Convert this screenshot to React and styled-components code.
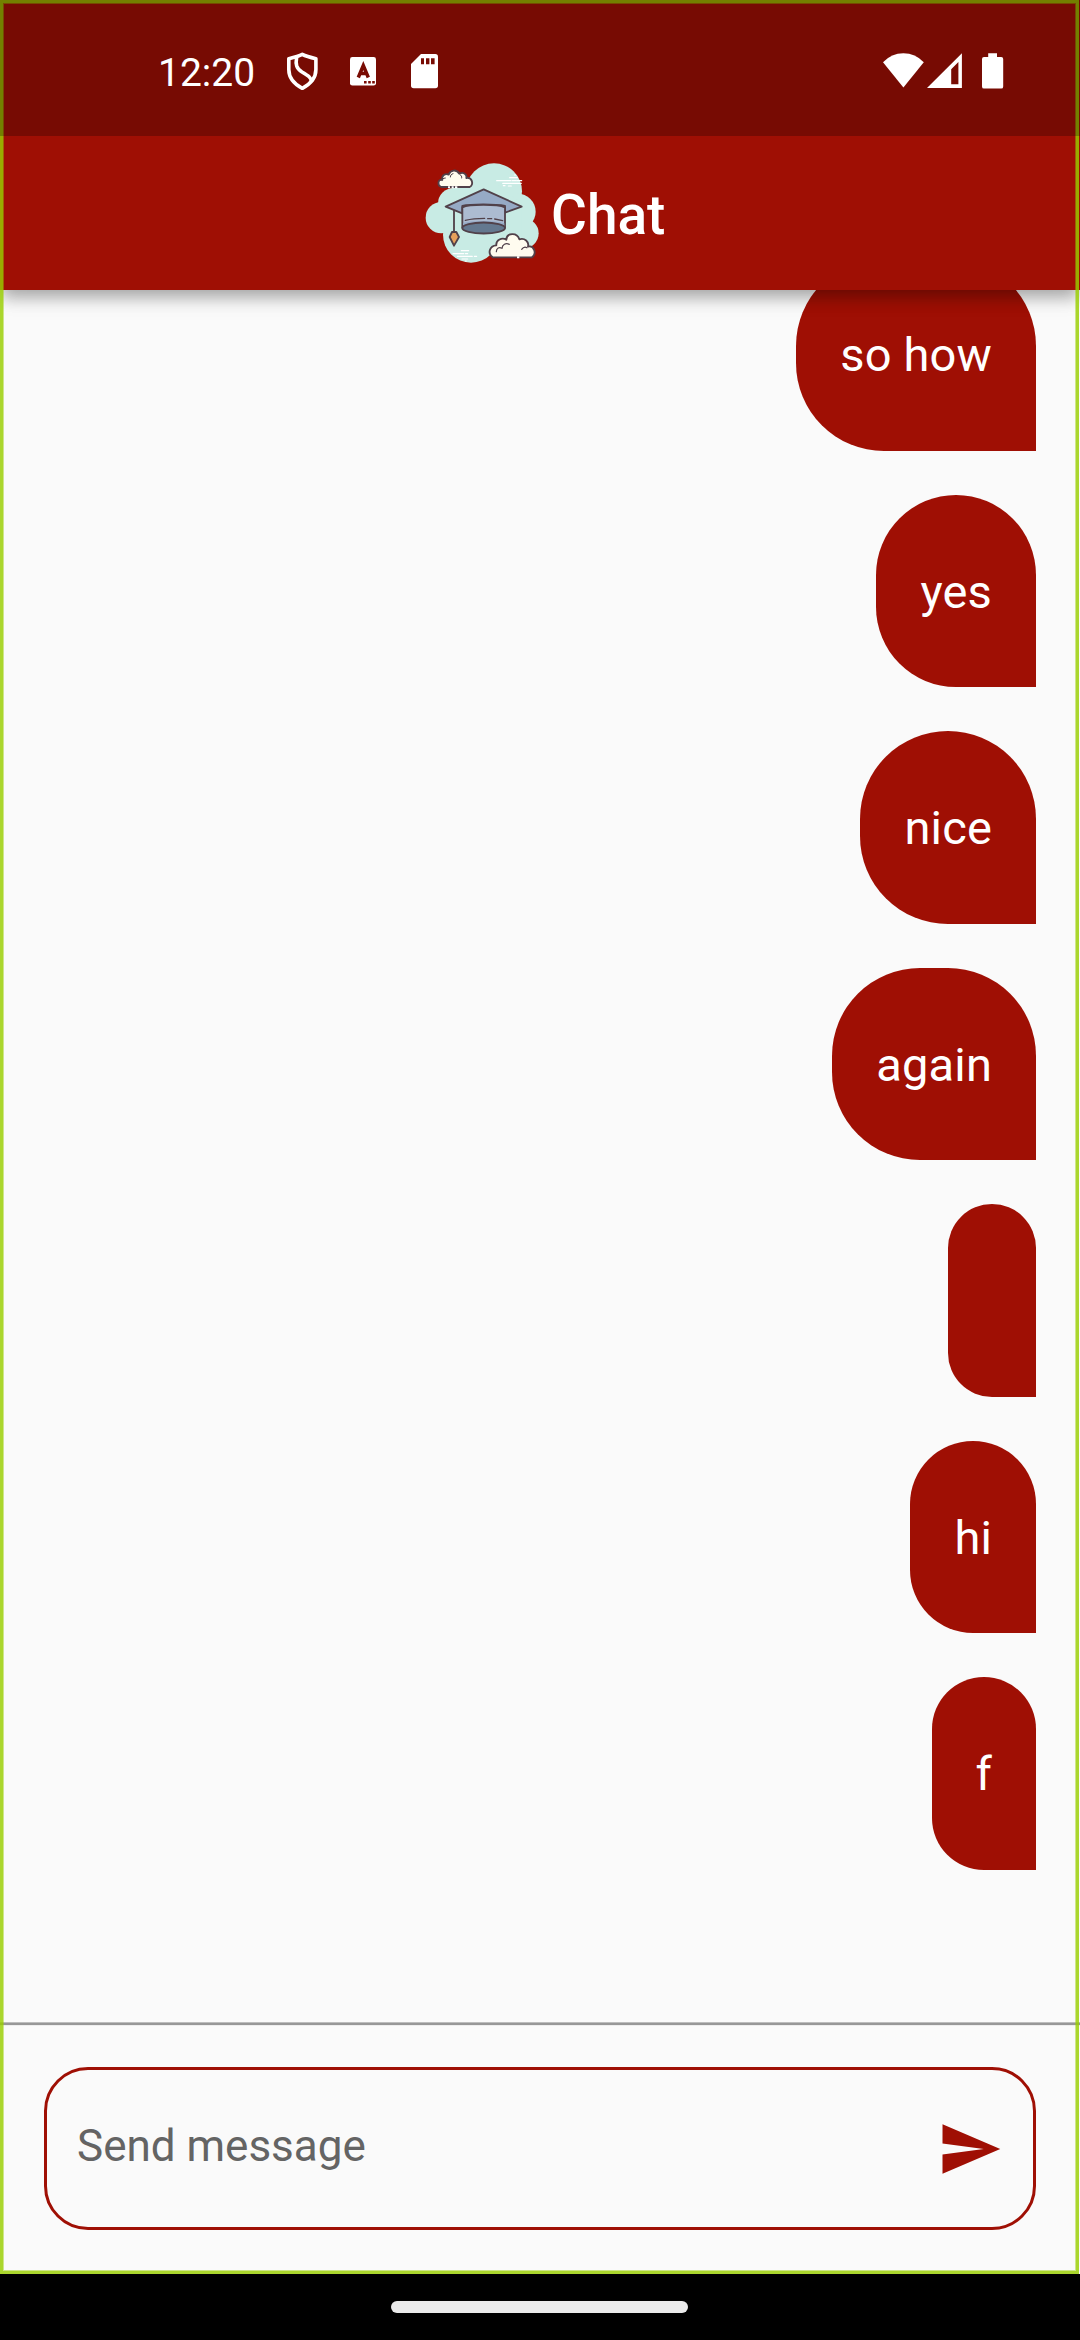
import React from "react";
import styled, { createGlobalStyle } from "styled-components";

const RED = "#9f0f04";

const GlobalStyle = createGlobalStyle`
  *, *::before, *::after { box-sizing: border-box; }
  body { margin: 0; background: #fafafa; }
  svg { display: block; flex: none; }
`;

const Screen = styled.div`
  position: relative;
  display: flex;
  flex-direction: column;
  width: 1080px;
  height: 2340px;
  overflow: hidden;
  background: #fafafa;
  font-family: Roboto, "Noto Sans", sans-serif;
`;

const DebugFrame = styled.div`
  position: absolute;
  z-index: 2;
  top: 0;
  left: 0;
  width: 1079px;
  height: 2274px;
  border: 3px solid rgba(152, 206, 0, 0.82);
  box-shadow: inset 0 0 0 1px rgba(152, 206, 0, 0.45);
  pointer-events: none;
`;

const Header = styled.header`
  position: relative;
  flex: none;
  background: ${RED};
  box-shadow: 0 11px 14px -3px rgba(0, 0, 0, 0.2), 0 3px 22px rgba(0, 0, 0, 0.22);
`;

const StatusBar = styled.div`
  position: relative;
  z-index: 3;
  display: flex;
  align-items: center;
  justify-content: space-between;
  height: 136px;
  padding: 6px 76px 0 158px;
  background: rgba(0, 0, 0, 0.25);
  color: #fff;
`;

const StatusGroup = styled.div`
  display: flex;
  align-items: center;
  gap: ${(p) => p.$gap}px;
`;

const Clock = styled.span`
  width: 102px;
  font-size: 39px;
  line-height: 46px;
  white-space: nowrap;
  padding-top: 3px;
`;

const AppBar = styled.div`
  display: flex;
  align-items: center;
  gap: 6px;
  height: 154px;
  padding-left: 425px;
`;

const Title = styled.h1`
  margin: 0;
  padding-top: 3px;
  color: #fff;
  font-size: 55px;
  font-weight: 500;
  line-height: 64px;
`;

const Messages = styled.main`
  flex: 1;
  min-height: 0;
  display: flex;
  flex-direction: column;
  justify-content: flex-end;
  align-items: flex-end;
  gap: 44px;
  padding: 0 44px 152.3px;
  overflow: hidden;
`;

const Bubble = styled.div`
  flex: none;
  display: flex;
  align-items: center;
  height: 192.5px;
  padding: 2px 44px 0;
  border-radius: 88px 88px 0 88px;
  background: ${RED};
  color: #fff;
  font-size: 47px;
  line-height: 54px;
  letter-spacing: 0.15px;
  white-space: nowrap;
`;

const Composer = styled.footer`
  flex: none;
  height: 252px;
`;

const Divider = styled.div`
  height: 4px;
  background: linear-gradient(#bdbdbd 0 1px, #979797 1px 3px, #ededed 3px 4px);
`;

const Field = styled.label`
  display: flex;
  align-items: center;
  justify-content: space-between;
  height: 163px;
  margin: 41px 44px 0;
  padding: 0 30px;
  border: 3px solid ${RED};
  border-radius: 44px;
`;

const Input = styled.input`
  flex: 1;
  min-width: 0;
  height: 60px;
  margin: 0 0 6px;
  padding: 0;
  border: 0;
  outline: 0;
  background: transparent;
  font: 400 44px Roboto, "Noto Sans", sans-serif;
  &::placeholder { color: #646464; opacity: 1; }
`;

const NavBar = styled.nav`
  flex: none;
  display: flex;
  justify-content: center;
  align-items: center;
  height: 66px;
  padding-right: 1px;
  background: #000;
`;

const HomePill = styled.div`
  width: 297px;
  height: 12px;
  border-radius: 6px;
  background: #ebebeb;
`;

const ShieldIcon = () => (
  <svg width="40" height="40" viewBox="0 0 40 40" fill="none" stroke="#fff" strokeWidth="3.6" strokeLinejoin="round">
    <path d="M20.3 3.4C16.5 5.4 11.5 6.6 6.8 7.7V18.5C6.8 27.2 12.8 33.4 20.3 37.3C27.8 33.4 33.9 27.2 33.9 18.5V7.7C29 6.6 24.2 5.4 20.3 3.4Z" />
    <path d="M14.6 6.5C13.4 13.5 14.3 17.4 20 21C26.2 24.6 29.6 26.6 29.4 31" />
  </svg>
);

const LetterIcon = () => (
  <svg width="40" height="40" viewBox="0 0 40 40">
    <rect x="7" y="6" width="26" height="28.6" rx="2.4" fill="#fff" />
    <path d="M15.3 26.5L20.3 14.6L25.3 26.5M17 22.6H23.6" fill="none" stroke="#790b03" strokeWidth="3.5" />
    <path d="M21 30h2.6v2.4H21zM25.2 30h2.6v2.4h-2.6zM29.2 30h2.6v2.4h-2.6z" fill="#790b03" />
  </svg>
);

const SdIcon = () => (
  <svg width="40" height="40" viewBox="0 0 40 40">
    <path d="M16 3H30.3Q33 3 33 5.7V34.6Q33 37.3 30.3 37.3H8.7Q6 37.3 6 34.6V13Z" fill="#fff" />
    <path d="M16 7.3h3v6h-3zM21 7.3h3.4v6H21zM26 7.3h3.6v6H26z" fill="#790b03" />
  </svg>
);

const WifiIcon = () => (
  <svg width="42" height="40" viewBox="0 0 42 40">
    <path d="M1 11.2Q9.5 2.2 21.4 2.2T41.8 11.2L21.4 36.4Z" fill="#fff" />
  </svg>
);

const SignalIcon = () => (
  <svg width="36" height="40" viewBox="0 0 36 40">
    <path fillRule="evenodd" d="M0 37L34.9 2.2V37ZM24.2 33.2H31.4V11L24.2 18.2Z" fill="#fff" />
  </svg>
);

const BatteryIcon = () => (
  <svg width="22" height="40" viewBox="0 0 22 40">
    <path d="M6.2 2.2H15V6H19.2Q21.2 6 21.2 8V35.4Q21.2 37.6 19.2 37.6H2Q0 37.6 0 35.4V8Q0 6 2 6H6.2Z" fill="#fff" />
  </svg>
);

const SendIcon = () => (
  <svg width="66" height="66" viewBox="0 0 24 24" fill={RED}>
    <path d="M2.01 21L23 12 2.01 3 2 10l15 2-15 2z" />
  </svg>
);

const GraduationLogo = () => (
  <svg width="120" height="106" viewBox="0 0 360 318">
    <g fill="#c8ebe4">
      <circle cx="207" cy="94" r="84" />
      <circle cx="86" cy="131" r="47" />
      <circle cx="49" cy="173" r="47" />
      <circle cx="278" cy="155" r="54" />
      <circle cx="296" cy="220" r="45" />
      <circle cx="138" cy="224" r="84" />
      <path d="M60 130L84 84L132 66L200 60L290 130V240L210 260H100Z" />
    </g>
    <g stroke="#fff" strokeWidth="3.5" strokeLinecap="round">
      <path d="M215 62H258M262 62H274M233 70H289M235 77H240M250 78H259M254 53H277M268 45H272M277 62H290" />
      <path d="M109 272H131M84 281H116M121 281H128M97 289H142M148 289H155M111 297H128M121 303H124" />
    </g>
    <g stroke="#51414a" strokeWidth="5.5" strokeLinejoin="round" strokeLinecap="round">
      <path d="M49 81C37 77 37 59 52 59C49 47 61 39 71 44C76 30 94 26 103 41C115 35 127 43 124 54C142 50 147 74 134 81Z" fill="#fffcef" />
      <path d="M61 54C54 54 51 58 51 62M84 41C79 42 76 46 76 51M105 44C109 46 111 50 110 54" fill="none" strokeWidth="3" />
      <path d="M203 292C187 281 193 257 214 256C212 240 231 231 244 239C245 218 276 216 283 238C299 233 313 245 309 260C326 255 337 280 321 292Z" fill="#fffcef" />
      <path d="M214 275C214 264 223 260 231 265C232 254 242 248 253 253M306 263C301 260 294 262 290 268" fill="none" strokeWidth="3.6" />
      <path d="M176 88L62 140L112 160V138C137 132 212 132 240 138V158L290 140Z" fill="#96aac6" />
      <path d="M112 142C133 132 217 132 240 142V203C216 218 136 218 112 203Z" fill="#acbbd1" />
      <path d="M114 190C131 181 217 181 238 190V204H114Z" fill="#96aac6" stroke="none" />
      <ellipse cx="176" cy="204" rx="64" ry="16.5" fill="#64788f" />
      <path d="M121 181C137 177 157 175 179 175M188 176H200M209 177L233 182" fill="none" strokeWidth="4" />
      <path d="M87 152V216" fill="none" />
      <path d="M81 216H94L102 231L87 257L74 231Z" fill="#e7a05b" />
    </g>
    <path d="M69 82H75M80 82H86M90 82H97M276 292H283" stroke="#fff" strokeWidth="6" />
  </svg>
);

const messages = ["so how", "yes", "nice", "again", "", "hi", "f"];

export default function App() {
  return (
    <>
      <GlobalStyle />
      <Screen>
        <Header>
          <StatusBar>
            <StatusGroup $gap={21.5}>
              <Clock>12:20</Clock>
              <ShieldIcon />
              <LetterIcon />
              <SdIcon />
            </StatusGroup>
            <StatusGroup $gap={19}>
              <StatusGroup $gap={3}>
                <WifiIcon />
                <SignalIcon />
              </StatusGroup>
              <BatteryIcon />
            </StatusGroup>
          </StatusBar>
          <AppBar>
            <GraduationLogo />
            <Title>Chat</Title>
          </AppBar>
        </Header>
        <Messages>
          {messages.map((text, i) => (
            <Bubble key={i}>{text}</Bubble>
          ))}
        </Messages>
        <Composer>
          <Divider />
          <Field>
            <Input placeholder="Send message" />
            <SendIcon />
          </Field>
        </Composer>
        <NavBar>
          <HomePill />
        </NavBar>
        <DebugFrame />
      </Screen>
    </>
  );
}
